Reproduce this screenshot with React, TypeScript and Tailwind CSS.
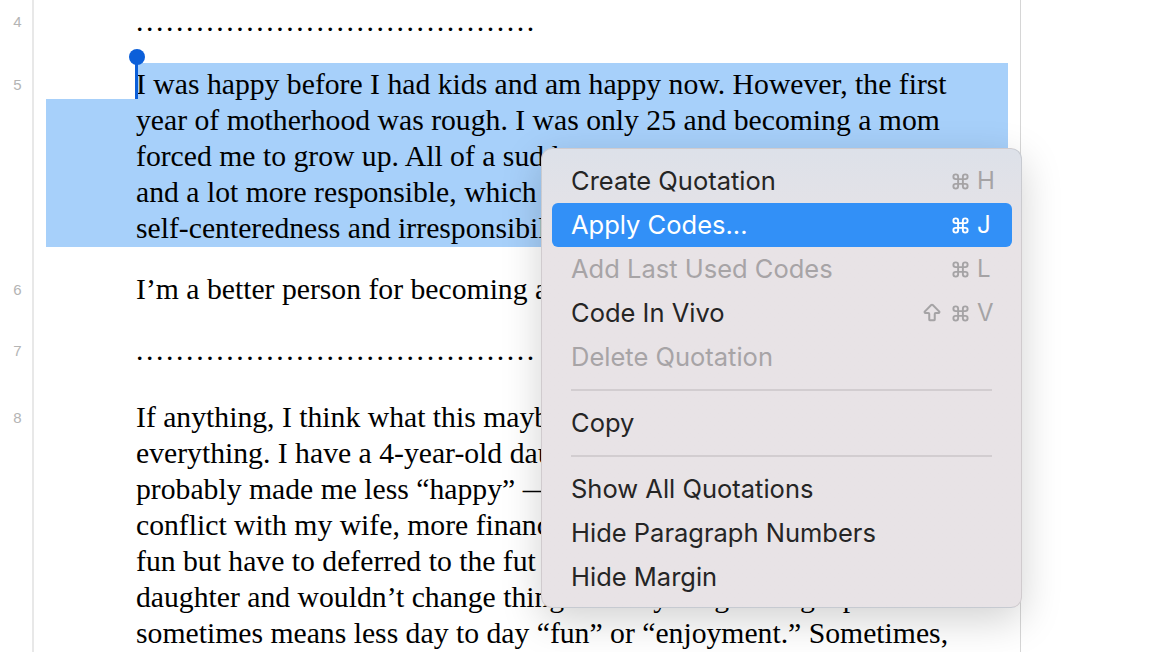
import { ArrowBigUp, Command } from "lucide-react";

const serif = "font-['Liberation_Serif','Times_New_Roman',serif]";

const dots = ".".repeat(40);

type Row = { n: number; pt: string; lines: string[] };

// lines that run under the menu are cut where the menu covers them
const rows: Row[] = [
  { n: 4, pt: "pt-[3px]", lines: [dots] },
  {
    n: 5,
    pt: "pt-[26px]",
    lines: [
      "I was happy before I had kids and am happy now. However, the first",
      "year of motherhood was rough. I was only 25 and becoming a mom",
      "forced me to grow up. All of a sudd",
      "and a lot more responsible, which",
      "self-centeredness and irresponsibil",
    ],
  },
  { n: 6, pt: "pt-[25px]", lines: ["I’m a better person for becoming a"] },
  { n: 7, pt: "pt-[24px]", lines: [dots] },
  {
    n: 8,
    pt: "pt-[30px]",
    lines: [
      "If anything, I think what this mayb",
      "everything. I have a 4-year-old dau",
      "probably made me less “happy” —",
      "conflict with my wife, more financ",
      "fun but have to deferred to the fut",
      "daughter and wouldn’t change things for anything. Being a parent",
      "sometimes means less day to day “fun” or “enjoyment.” Sometimes,",
    ],
  },
];

type Item =
  | { kind: "item"; label: string; keys?: { shift?: boolean; key: string }; disabled?: boolean; active?: boolean }
  | { kind: "sep" };

const menu: Item[] = [
  { kind: "item", label: "Create Quotation", keys: { key: "H" } },
  { kind: "item", label: "Apply Codes...", keys: { key: "J" }, active: true },
  { kind: "item", label: "Add Last Used Codes", keys: { key: "L" }, disabled: true },
  { kind: "item", label: "Code In Vivo", keys: { shift: true, key: "V" } },
  { kind: "item", label: "Delete Quotation", disabled: true },
  { kind: "sep" },
  { kind: "item", label: "Copy" },
  { kind: "sep" },
  { kind: "item", label: "Show All Quotations" },
  { kind: "item", label: "Hide Paragraph Numbers" },
  { kind: "item", label: "Hide Margin" },
];

const Shortcut = ({ shift, k, active }: { shift?: boolean; k: string; active?: boolean }) => (
  <div className={`flex items-center ${active ? "text-white" : "text-[#a5a3a5]"}`}>
    {shift && <ArrowBigUp className="w-[22px] h-[22px] mr-[8px]" strokeWidth={2.2} />}
    <Command className="w-[19px] h-[19px]" strokeWidth={2.4} />
    <span className="w-[16px] ml-[7px] text-[24px] leading-none">{k}</span>
  </div>
);

const ContextMenu = () => (
  <div className="absolute left-[541px] top-[148px] w-[481px] rounded-[11px] border border-black/10 bg-linear-to-b from-[#dde1e9] from-0% to-[#e8e3e6] to-[22%] shadow-[0_12px_40px_rgba(0,0,0,0.18)] pt-[10px] pb-[8px] font-['Inter',sans-serif] z-20">
    {menu.map((it, i) =>
      it.kind === "sep" ? (
        <div key={i} className="h-[22px] flex items-center px-[29px]">
          <div className="h-[2px] w-full bg-[#d2cdd0]" />
        </div>
      ) : (
        <div
          key={i}
          className={`h-[44px] ml-[10px] mr-[9px] px-[19px] rounded-[6px] flex items-center justify-between text-[25.5px] ${
            it.active ? "bg-[#3290f7] text-white" : it.disabled ? "text-[#a7a4a6]" : "text-[#252525]"
          }`}
        >
          <span>{it.label}</span>
          {it.keys && <Shortcut shift={it.keys.shift} k={it.keys.key} active={it.active} />}
        </div>
      )
    )}
  </div>
);

export default function App() {
  return (
    <div className="relative w-[1154px] h-[652px] overflow-hidden bg-white">
      {/* selection */}
      <div className="absolute left-[136px] top-[63px] w-[872px] h-[36px] bg-[#a7d0fa]" />
      <div className="absolute left-[46px] top-[99px] w-[962px] h-[148px] bg-[#a7d0fa]" />

      <div className="flex flex-col w-[1021px] h-full border-r border-[#d6d6d6]">
        {rows.map((r) => (
          <div key={r.n} className="relative flex">
            <div
              className={`w-[34px] shrink-0 ${r.pt} border-r-2 border-[#e8e8e8] pl-[3px] text-center text-[15px] leading-[36px] text-[#b4b4b4] font-['Liberation_Sans',Arial,sans-serif]`}
            >
              <div className="mt-[1px]">{r.n}</div>
            </div>
            <div className={`${r.pt} pl-[102px] text-[29.7px] leading-[36px] text-black ${serif}`}>
              {r.lines.map((l, i) => (
                <div key={i} className={`whitespace-nowrap ${l === dots ? "tracking-[2.6px]" : ""}`}>
                  {l}
                </div>
              ))}
            </div>
          </div>
        ))}
        <div className="flex-1 w-[34px] border-r-2 border-[#e8e8e8]" />
      </div>

      {/* caret handle */}
      <div className="absolute left-[129px] top-[49px] w-[16px] h-[16px] rounded-full bg-[#0b5fd9] z-10" />
      <div className="absolute left-[135px] top-[57px] w-[3px] h-[42px] bg-[#0b5fd9] z-10" />

      <ContextMenu />
    </div>
  );
}
